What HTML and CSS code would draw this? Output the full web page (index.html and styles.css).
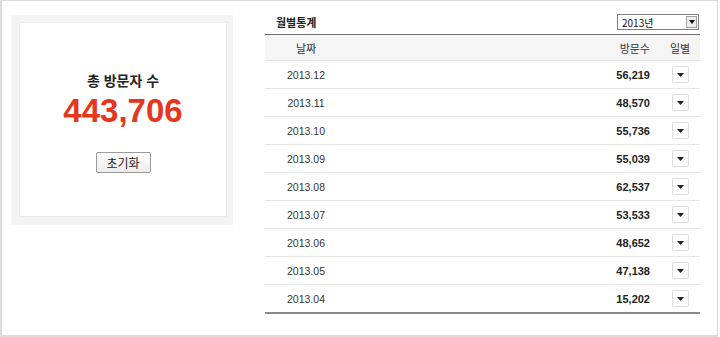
FILE: index.html
```html
<!DOCTYPE html>
<html lang="ko">
<head>
    <meta charset="UTF-8">
    <meta name="viewport" content="width=device-width, initial-scale=1.0">
    <title>방문자 통계</title>
    <link rel="stylesheet" href="styles.css">
</head>
<body>
    <div class="frame">
        <div class="total-box">
            <div class="total-inner">
                <div class="total-label">총 방문자 수</div>
                <div class="total-value">443,706</div>
                <button class="reset-btn" type="button">초기화</button>
            </div>
        </div>

        <div class="monthly">
            <div class="monthly-head">
                <h2>월별통계</h2>
                <div class="year-select">
                    <span>2013년</span>
                    <span class="year-arrow">
                        <svg width="6" height="4" viewBox="0 0 6 4"><path d="M0 0h6L3 4z" fill="#111"/></svg>
                    </span>
                </div>
            </div>
            <table class="stats">
                <thead>
                    <tr>
                        <th class="col-date">날짜</th>
                        <th class="col-count">방문수</th>
                        <th class="col-day">일별</th>
                    </tr>
                </thead>
                <tbody id="stats-body"></tbody>
            </table>
        </div>
    </div>

    <script>
        // 월별 방문자 데이터
        const rows = [
            ['2013.12', '56,219'],
            ['2013.11', '48,570'],
            ['2013.10', '55,736'],
            ['2013.09', '55,039'],
            ['2013.08', '62,537'],
            ['2013.07', '53,533'],
            ['2013.06', '48,652'],
            ['2013.05', '47,138'],
            ['2013.04', '15,202']
        ];

        const body = document.getElementById('stats-body');
        rows.forEach(([month, count]) => {
            const tr = document.createElement('tr');
            tr.innerHTML = `
                <td class="col-date">${month}</td>
                <td class="col-count">${count}</td>
                <td class="col-day">
                    <button class="day-btn" type="button">
                        <svg width="7" height="4" viewBox="0 0 7 4"><path d="M0 0h7L3.5 4z" fill="#222"/></svg>
                    </button>
                </td>`;
            body.appendChild(tr);
        });
    </script>
</body>
</html>
```
FILE: styles.css
```css
body {
    margin: 0;
    font-family: "Liberation Sans", "Noto Sans CJK KR", sans-serif;
    background-color: #fff;
}

.frame {
    box-sizing: border-box;
    width: 718px;
    height: 337px;
    border: 1px solid #dcdcdc;
    border-left-width: 2px;
    border-bottom-width: 2px;
    display: flex;
    align-items: flex-start;
}

.total-box {
    box-sizing: border-box;
    width: 222px;
    height: 210px;
    margin: 14px 0 0 9px;
    padding: 7px 6px 8px 8px;
    background-color: #f3f3f3;
}

.total-inner {
    box-sizing: border-box;
    height: 100%;
    background-color: #fff;
    border: 1px solid #ececec;
    text-align: center;
    padding-top: 49px;
}

.total-label {
    font-size: 14px;
    font-weight: 600;
    line-height: 18px;
    color: #222;
}

.total-value {
    font-size: 33px;
    font-weight: bold;
    line-height: 36px;
    margin-top: 3px;
    color: #e5361e;
}

.reset-btn {
    margin-top: 23px;
    width: 55px;
    height: 21px;
    padding: 0;
    font-family: "Noto Sans CJK KR", sans-serif;
    font-size: 12px;
    color: #222;
    border: 1px solid #9a9a9a;
    border-radius: 2px;
    background: linear-gradient(#ffffff, #ececec);
}

.monthly {
    width: 435px;
    margin: 10px 0 0 32px;
}

.monthly-head {
    display: flex;
    align-items: center;
    justify-content: space-between;
    height: 22px;
    padding-bottom: 1px;
    border-bottom: 1px solid #6f6f6f;
}

.monthly-head h2 {
    margin: 0 0 0 11px;
    font-family: "Noto Sans CJK KR", sans-serif;
    font-size: 11px;
    font-weight: bold;
    color: #222;
}

.year-select {
    box-sizing: border-box;
    width: 82px;
    height: 16px;
    margin-right: 1px;
    display: flex;
    align-items: center;
    justify-content: space-between;
    padding: 0 1px 0 4px;
    border: 1px solid #7f7f7f;
    font-family: "Noto Sans CJK KR", sans-serif;
    font-size: 10px;
    color: #111;
}

.year-arrow {
    box-sizing: border-box;
    width: 11px;
    height: 12px;
    display: flex;
    align-items: center;
    justify-content: center;
    border: 1px solid #a0a0a0;
    background-color: #eee;
}

.stats {
    width: 100%;
    border-collapse: collapse;
}

.stats th {
    height: 25px;
    padding: 0;
    font-family: "Noto Sans CJK KR", sans-serif;
    font-size: 11px;
    font-weight: normal;
    color: #333;
    background-color: #f5f5f5;
    border-bottom: 1px solid #e4e4e4;
}

.stats td {
    height: 27px;
    padding: 0;
    font-size: 10.5px;
    color: #333;
    border-bottom: 1px solid #e6e6e6;
}

.stats tbody tr:last-child td {
    border-bottom: 2px solid #8a8a8a;
}

.col-date {
    width: 82px;
    text-align: center;
}

.stats .col-count {
    text-align: right;
    padding-right: 10px;
}

.stats td.col-count {
    font-size: 11px;
    font-weight: bold;
    color: #222;
}

.col-day {
    width: 40px;
    text-align: center;
}

.day-btn {
    box-sizing: border-box;
    width: 17px;
    height: 17px;
    padding: 0;
    display: inline-flex;
    align-items: center;
    justify-content: center;
    vertical-align: middle;
    border: 1px solid #dedede;
    border-radius: 2px;
    background-color: #fff;
}
```
